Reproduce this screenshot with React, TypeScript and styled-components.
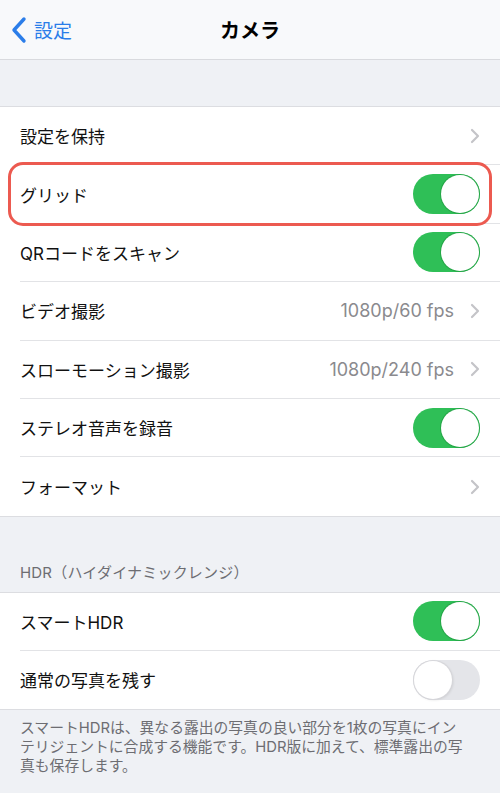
import React from "react";
import styled, { createGlobalStyle } from "styled-components";

const Global = createGlobalStyle`
  html, body { margin: 0; padding: 0; background: #eff1f5; }
  body { font-family: "Inter", "Noto Sans CJK JP", sans-serif; -webkit-font-smoothing: antialiased; }
  * { box-sizing: border-box; }
`;

const Page = styled.div`
  width: 500px;
  min-height: 793px;
  background: #eff1f5;
  display: flex;
  flex-direction: column;
`;

const NavBar = styled.div`
  height: 60px;
  background: #f8f9fb;
  border-bottom: 1px solid #d9dade;
  display: grid;
  grid-template-columns: 1fr auto 1fr;
  align-items: center;
  padding: 0 10px;
`;

const Back = styled.div`
  display: flex;
  align-items: center;
  gap: 6px;
  color: #2b7de9;
  font-size: 19px;
  font-family: "Noto Sans CJK JP", sans-serif;
`;

const Title = styled.div`
  font-size: 20px;
  font-weight: 700;
  color: #000;
  font-family: "Noto Sans CJK JP", sans-serif;
`;

const Spacer = styled.div<{ h: number }>`
  height: ${(p) => p.h}px;
`;

const SectionHeader = styled.div`
  height: 75px;
  display: flex;
  align-items: flex-end;
  padding: 0 20px 10px;
  font-size: 15px;
  color: #6d6d72;
  letter-spacing: 0.2px;
`;

const Group = styled.div`
  background: #fff;
  border-top: 1px solid #dcdde1;
  border-bottom: 1px solid #dcdde1;
  padding-left: 20px;
`;

const Row = styled.div<{ last?: boolean; h: number }>`
  position: relative;
  height: ${(p) => p.h}px;
  display: flex;
  align-items: center;
  padding-right: 20px;
  border-bottom: ${(p) => (p.last ? "none" : "1px solid #e2e3e6")};
`;

const Label = styled.div`
  flex: 1;
  font-size: 17px;
  color: #111;
`;

const Value = styled.div`
  font-size: 18px;
  color: #8a8a8e;
  margin-right: 16px;
`;

const Highlight = styled.div`
  position: absolute;
  left: -12px;
  right: 8px;
  top: -3px;
  bottom: -3px;
  border: 3px solid #ec5a50;
  border-radius: 15px;
  pointer-events: none;
`;

const Track = styled.div<{ on: boolean }>`
  width: 67px;
  height: 40px;
  border-radius: 20px;
  background: ${(p) => (p.on ? "#2fbf57" : "#e4e5e9")};
  position: relative;
  flex-shrink: 0;
`;

const Knob = styled.div<{ on: boolean }>`
  position: absolute;
  top: 1px;
  ${(p) => (p.on ? "right: 1px;" : "left: 1px;")}
  width: 38px;
  height: 38px;
  border-radius: 50%;
  background: #fff;
  box-shadow: ${(p) =>
    p.on ? "0 0 0 1px rgba(30,150,60,0.6)" : "0 0 0 1px #d6d6da, 1px 1px 3px rgba(0,0,0,0.12)"};
`;

const Footer = styled.div`
  padding: 9px 10px 0 20px;
  font-size: 14.8px;
  line-height: 19px;
  color: #6d6d72;
  white-space: nowrap;
`;

const Chevron = () => (
  <svg width="10" height="16" viewBox="0 0 10 16">
    <polyline points="2,2 8,8 2,14" fill="none" stroke="#c4c4c8" strokeWidth="2.2" strokeLinecap="round" strokeLinejoin="round" />
  </svg>
);

const Toggle = ({ on }: { on: boolean }) => (
  <Track on={on}>
    <Knob on={on} />
  </Track>
);

type Item = { label: string; value?: string; toggle?: boolean; on?: boolean; highlight?: boolean };

const main: Item[] = [
  { label: "設定を保持" },
  { label: "グリッド", toggle: true, on: true, highlight: true },
  { label: "QRコードをスキャン", toggle: true, on: true },
  { label: "ビデオ撮影", value: "1080p/60 fps" },
  { label: "スローモーション撮影", value: "1080p/240 fps" },
  { label: "ステレオ音声を録音", toggle: true, on: true },
  { label: "フォーマット" },
];

const hdr: Item[] = [
  { label: "スマートHDR", toggle: true, on: true },
  { label: "通常の写真を残す", toggle: true, on: false },
];

const renderRows = (items: Item[], h: number) =>
  items.map((it, i) => (
    <Row key={it.label} h={h} last={i === items.length - 1}>
      <Label>{it.label}</Label>
      {it.value && <Value>{it.value}</Value>}
      {it.toggle ? <Toggle on={!!it.on} /> : <Chevron />}
      {it.highlight && <Highlight />}
    </Row>
  ));

export default function App() {
  return (
    <Page>
      <Global />
      <NavBar>
        <Back>
          <svg width="18" height="28" viewBox="0 0 18 28">
            <polyline points="14,3 4,14 14,25" fill="none" stroke="#2b7de9" strokeWidth="3.4" strokeLinecap="round" strokeLinejoin="round" />
          </svg>
          設定
        </Back>
        <Title>カメラ</Title>
        <div />
      </NavBar>
      <Spacer h={46} />
      <Group>{renderRows(main, 58.4)}</Group>
      <SectionHeader>HDR（ハイダイナミックレンジ）</SectionHeader>
      <Group>{renderRows(hdr, 58)}</Group>
      <Footer>
        スマートHDRは、異なる露出の写真の良い部分を1枚の写真にイン
        <br />
        テリジェントに合成する機能です。HDR版に加えて、標準露出の写
        <br />
        真も保存します。
      </Footer>
    </Page>
  );
}
